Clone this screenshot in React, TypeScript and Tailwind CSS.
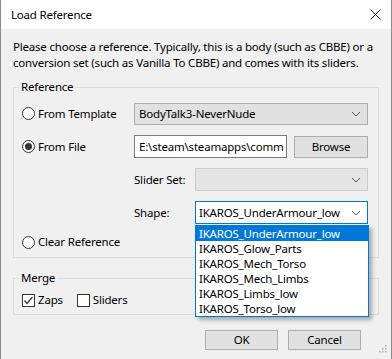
import React from "react";

function Chevron() {
  return (
    <svg width="10" height="6" viewBox="0 0 10 6" className="shrink-0">
      <path d="M1 1 L5 5 L9 1" fill="none" stroke="#555" strokeWidth="1" />
    </svg>
  );
}

function Radio({ checked }: { checked?: boolean }) {
  return (
    <span className="w-[13px] h-[13px] rounded-full border border-[#333] bg-white flex items-center justify-center shrink-0">
      {checked && <span className="w-[7px] h-[7px] rounded-full bg-[#333]" />}
    </span>
  );
}

function Check({ checked }: { checked?: boolean }) {
  return (
    <span className="w-[13px] h-[13px] border border-[#333] bg-white flex items-center justify-center shrink-0">
      {checked && (
        <svg width="11" height="11" viewBox="0 0 11 11">
          <path d="M1.5 5.5 L4 8.5 L9.5 2" fill="none" stroke="#333" strokeWidth="1.2" />
        </svg>
      )}
    </span>
  );
}

const items = [
  "IKAROS_UnderArmour_low",
  "IKAROS_Glow_Parts",
  "IKAROS_Mech_Torso",
  "IKAROS_Mech_Limbs",
  "IKAROS_Limbs_low",
  "IKAROS_Torso_low",
];

export default function App() {
  return (
    <div
      className="relative w-[392px] h-[359px] overflow-hidden bg-[#f0f0f0] border-l border-r border-[#8a8a8a] text-[11.5px] tracking-[-0.2px] leading-[16px] text-black"
      style={{ fontFamily: '"Noto Sans", "Open Sans", sans-serif' }}
    >
      {/* Title bar */}
      <div className="h-[29px] bg-white flex items-center justify-between pl-[10px] pr-[10px]">
        <span>Load Reference</span>
        <svg width="11" height="11" viewBox="0 0 11 11">
          <path d="M0.5 0.5 L10.5 10.5 M10.5 0.5 L0.5 10.5" stroke="#222" strokeWidth="1" />
        </svg>
      </div>

      <div className="px-[12px]">
        <p className="mt-[10px] whitespace-nowrap">
          Please choose a reference. Typically, this is a body (such as CBBE) or a
          <br />
          conversion set (such as Vanilla To CBBE) and comes with its sliders.
        </p>

        {/* Reference group */}
        <fieldset className="mt-[8px] border border-[#dcdcdc] pl-[8px] pr-[10px] pb-[7px]">
          <legend className="ml-[-3px] px-[2px]">Reference</legend>
          <div className="flex flex-col gap-[10px] mt-[7px]">
            <div className="flex items-center h-[23px]">
              <div className="w-[112px] flex items-center gap-[3px]">
                <Radio />
                <span>From Template</span>
              </div>
              <div className="flex-1 h-[22px] bg-[#e1e1e1] border border-[#adadad] flex items-center justify-between pl-[4px] pr-[6px]">
                <span>BodyTalk3-NeverNude</span>
                <Chevron />
              </div>
            </div>
            <div className="flex items-center h-[23px]">
              <div className="w-[112px] flex items-center gap-[3px]">
                <Radio checked />
                <span>From File</span>
              </div>
              <div className="w-[153px] h-[23px] bg-white border border-[#7a7a7a] flex items-center pl-[4px] overflow-hidden whitespace-nowrap">
                <span className="whitespace-nowrap">E:\steam\steamapps\comm</span>
              </div>
              <div className="ml-[7px] flex-1 h-[22px] bg-[#e1e1e1] border border-[#adadad] flex items-center justify-center">
                Browse
              </div>
            </div>
            <div className="flex items-center h-[23px]">
              <div className="w-[112px]" />
              <span className="w-[61px]">Slider Set:</span>
              <div className="flex-1 h-[23px] bg-[#e5e5e5] border border-[#cccccc] flex items-center justify-end pr-[6px]">
                <Chevron />
              </div>
            </div>
            <div className="flex items-center h-[23px]">
              <div className="w-[112px]" />
              <span className="w-[61px]">Shape:</span>
              <div className="flex-1 h-[23px] bg-white border border-[#0078d7] flex items-center justify-between pl-[3px] pr-[6px]">
                <span>IKAROS_UnderArmour_low</span>
                <Chevron />
              </div>
            </div>
            <div className="flex items-center h-[16px] gap-[3px]">
              <Radio />
              <span>Clear Reference</span>
            </div>
          </div>
        </fieldset>

        {/* Merge group */}
        <fieldset className="mt-[12px] border border-[#dcdcdc] pl-[8px] pr-[10px] pb-[6px]">
          <legend className="ml-[-3px] px-[2px]">Merge</legend>
          <div className="flex items-center h-[16px] mt-[6px]">
            <Check checked />
            <span className="ml-[3px]">Zaps</span>
            <span className="ml-[14px]">
              <Check />
            </span>
            <span className="ml-[3px]">Sliders</span>
          </div>
        </fieldset>

        <div className="flex justify-end gap-[10px] mt-[15px] pr-[18px]">
          <div className="w-[73px] h-[20px] bg-[#e1e1e1] border border-[#adadad] flex items-center justify-center">
            OK
          </div>
          <div className="w-[73px] h-[20px] bg-[#e1e1e1] border border-[#adadad] flex items-center justify-center">
            Cancel
          </div>
        </div>
      </div>

      {/* size grip */}
      <svg className="absolute right-[4px] bottom-[4px]" width="10" height="10" viewBox="0 0 10 10">
        <rect x="8" y="0" width="1.5" height="1.5" fill="#b0b0b0" />
        <rect x="5" y="3" width="1.5" height="1.5" fill="#b0b0b0" />
        <rect x="8" y="3" width="1.5" height="1.5" fill="#b0b0b0" />
        <rect x="2" y="6" width="1.5" height="1.5" fill="#b0b0b0" />
        <rect x="5" y="6" width="1.5" height="1.5" fill="#b0b0b0" />
        <rect x="8" y="6" width="1.5" height="1.5" fill="#b0b0b0" />
      </svg>

      {/* Open dropdown list */}
      <div className="absolute left-[194px] top-[225px] w-[174px] bg-white border border-[#0078d7] shadow-[3px_3px_4px_rgba(0,0,0,0.3)]">
        {items.map((it, i) => (
          <div
            key={it}
            className={
              i === 0
                ? "h-[15px] leading-[15px] pl-[3px] bg-[#0078d7] text-white"
                : "h-[15px] leading-[15px] pl-[3px]"
            }
          >
            {it}
          </div>
        ))}
      </div>
    </div>
  );
}
